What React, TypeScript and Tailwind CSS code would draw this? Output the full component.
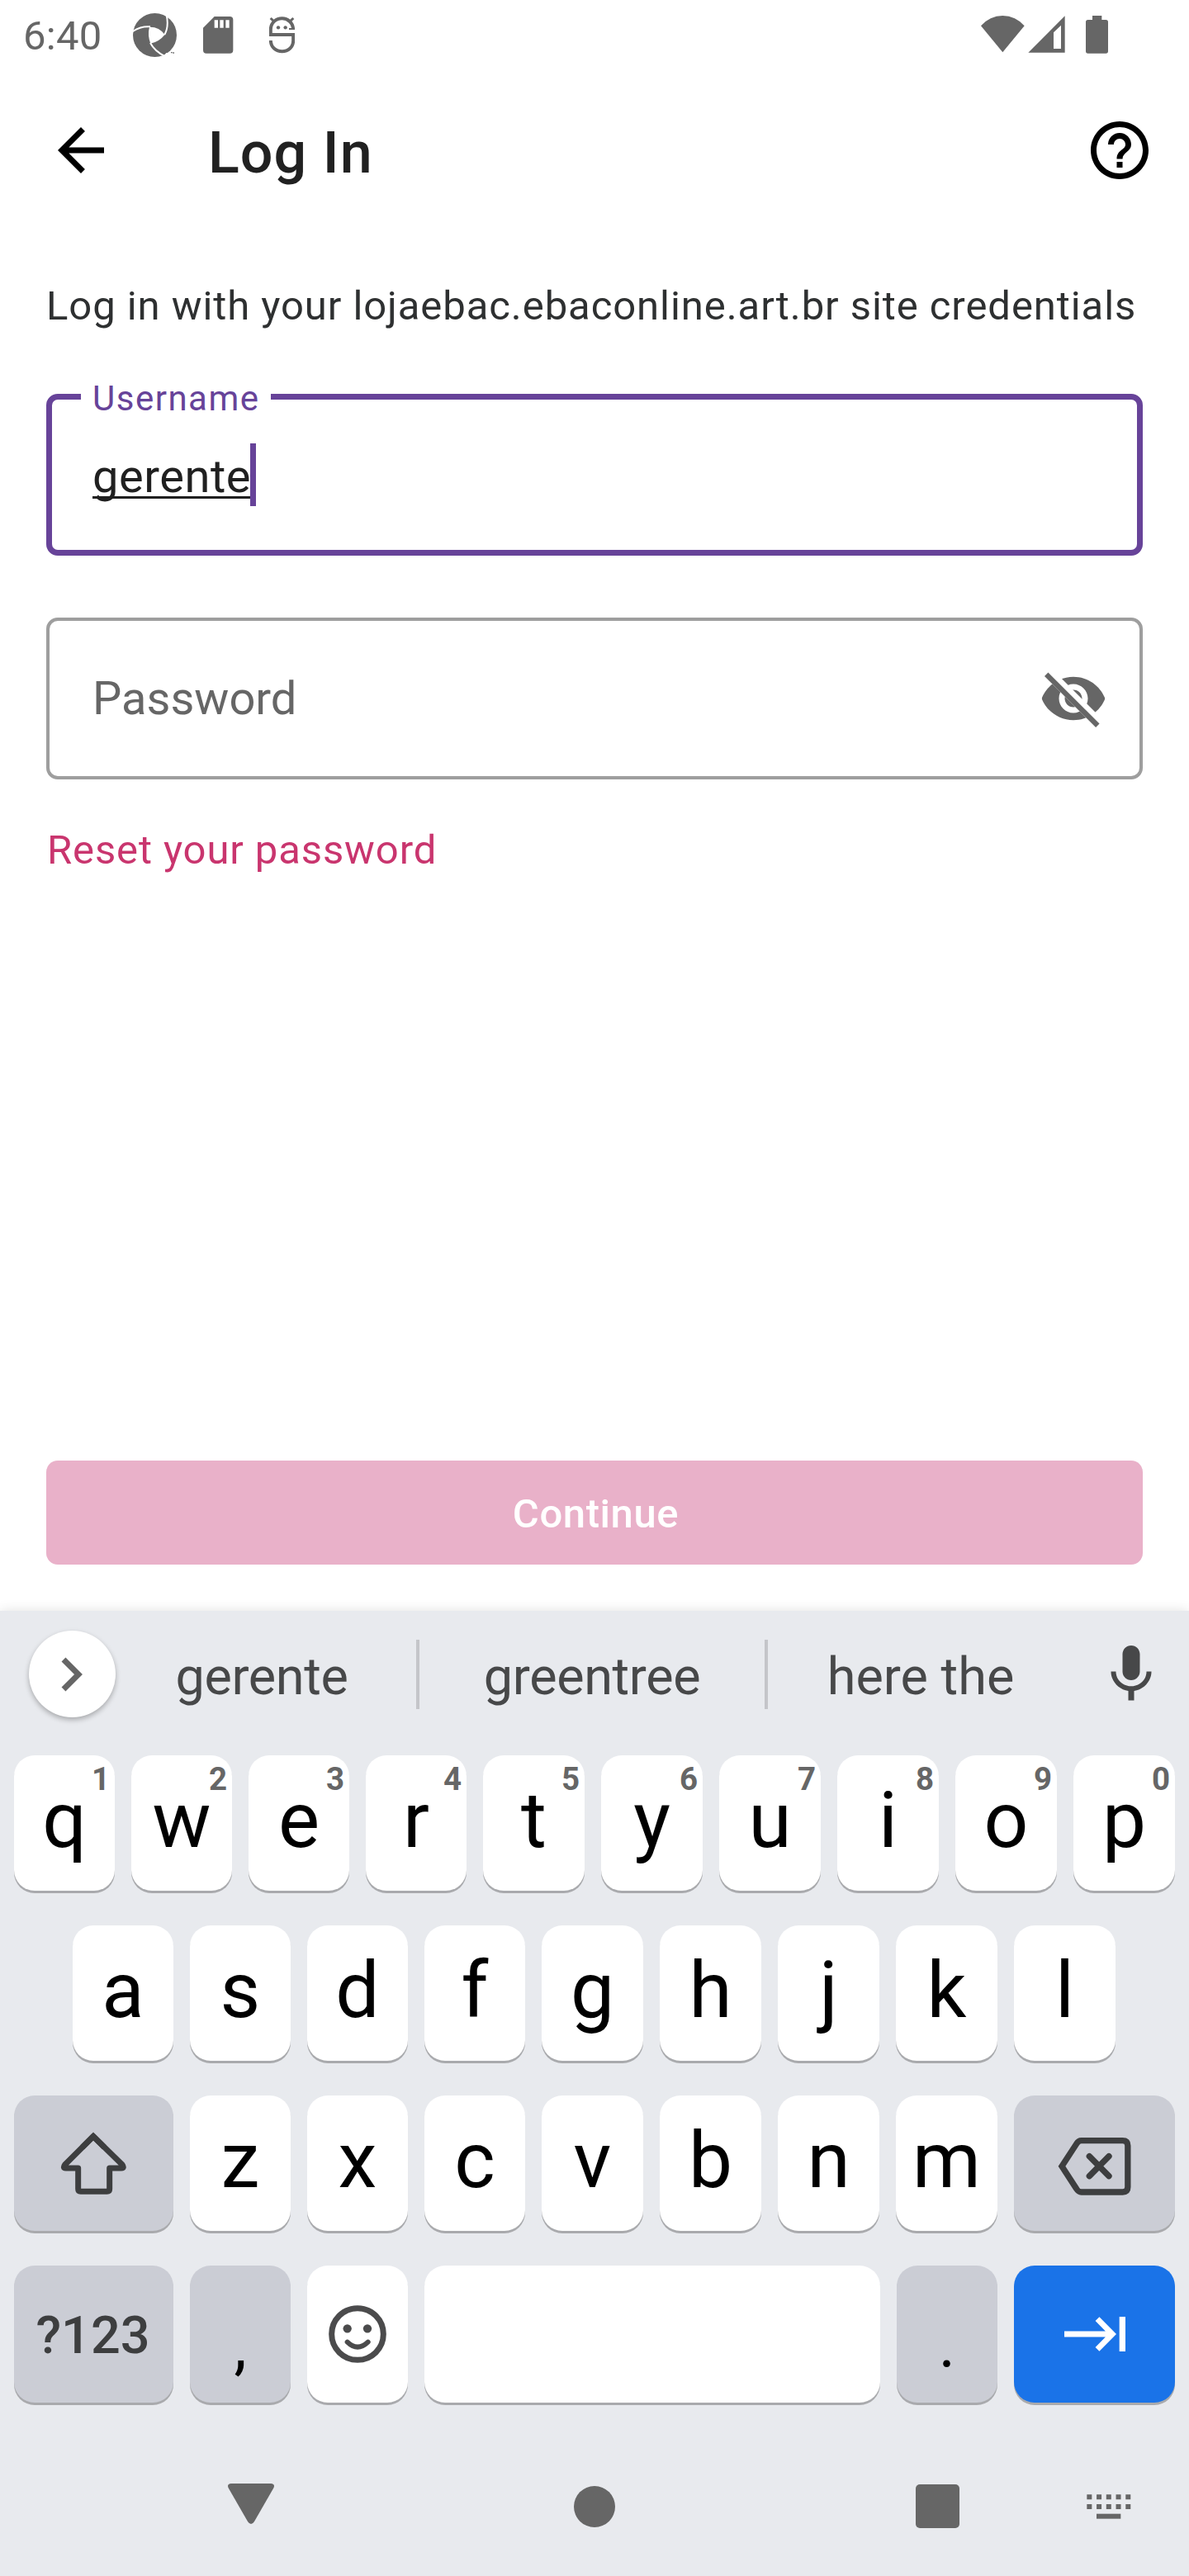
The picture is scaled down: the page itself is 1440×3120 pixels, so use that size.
import type { ReactNode } from "react";
import { MdArrowBack, MdHelpOutline, MdMic } from "react-icons/md";

function StatusBar() {
  return (
    <div className="flex h-[84px] shrink-0 items-start pl-7 text-[#666666]">
      <span className="mt-4 w-[133px] text-[49px] leading-[56px] tracking-[0.3px]">6:40</span>
      <svg className="mt-4 h-[53px] w-[53px]" viewBox="483 48 159 159">
        <circle cx="562.5" cy="127.5" r="79.5" fill="#666666" />
        <path d="M543 98Q578 97 599 126Q577 153 547 158Q535 128 543 98Z" fill="#fff" />
        <path d="M478 117Q510 94 546 97M598 126Q615 95 604 50M546 156Q562 186 600 205" fill="none" stroke="#fff" strokeWidth="6" />
        <path d="M588 212L604 192H644V212Z" fill="#fff" />
        <path d="M621 191h5M628 192h5" stroke="#666666" strokeWidth="4" />
      </svg>
      <svg className="mt-5 ml-8 h-[45px] w-[37px]" viewBox="738 60 111 135">
        <path
          fillRule="evenodd"
          fill="#666666"
          d="M779 60H835Q847 60 847 72V182Q847 194 835 194H750Q738 194 738 182V101ZM779 73V101H792V73ZM799 73V101H812V73ZM820 73V101H833V73Z"
        />
      </svg>
      <svg className="mt-5 ml-[43px] h-[45px] w-[31px]" viewBox="978 60 93 135">
        <path
          d="M1065.500 108C1065 82 1045 67 1025 67C1003 67 984 82 983.500 107V126H1065.500V148C1065 172 1047 187 1025 187C1003 187 984 172 983.500 147"
          fill="none"
          stroke="#666666"
          strokeWidth="12"
        />
        <path d="M983 66L998 80M1066 66L1051 80" stroke="#666666" strokeWidth="9" />
        <path d="M1050 102H1071V108H1050Z" fill="#666666" />
        <circle cx="1011" cy="100" r="6.500" fill="#666666" />
        <circle cx="1037" cy="100" r="6.500" fill="#666666" />
      </svg>
      <div className="mr-[98px] ml-auto flex items-start">
        <svg className="mt-[19px] h-[45px] w-[53px]" viewBox="144 57 159 135">
          <path d="M144 94A103 103 0 0 1 302 94L223 190Z" fill="#666666" />
        </svg>
        <svg className="mt-[19px] ml-1 h-[45px] w-[45px]" viewBox="315 57 135 135">
          <path fillRule="evenodd" d="M316 191H449V58ZM408 118L435 92V177H408Z" fill="#666666" />
        </svg>
        <svg className="mt-[19px] ml-[25px] h-[46px] w-[27px]" viewBox="525 57 81 138">
          <path d="M549 57H583V72H598Q606 72 606 80V186Q606 194 598 194H533Q525 194 525 186V80Q525 72 533 72H549Z" fill="#666666" />
        </svg>
      </div>
    </div>
  );
}

function Header() {
  return (
    <header className="flex h-[196px] shrink-0 items-center pr-[42px] pl-14 text-black">
      <MdArrowBack className="h-[84px] w-[84px]" />
      <h1 className="mt-[6px] ml-28 text-[70px] leading-[84px] font-medium tracking-[1.05px] text-[#212121]">Log In</h1>
      <MdHelpOutline className="ml-auto h-[84px] w-[84px]" />
    </header>
  );
}

function HiddenEye() {
  return (
    <svg className="h-[84px] w-[84px]" viewBox="0 0 24 24">
      <clipPath id="eye-clip">
        <path d="M2 4.270L19.730 22L22.270 19.460L4.540 1.730V1H23V23H1V4.270Z" />
      </clipPath>
      <path
        clipPath="url(#eye-clip)"
        fill="#666666"
        d="M12 4.500C7 4.500 2.730 7.610 1 12c1.730 4.390 6 7.500 11 7.500s9.270-3.110 11-7.500c-1.730-4.390-6-7.500-11-7.500zM12 17c-2.760 0-5-2.240-5-5s2.240-5 5-5 5 2.240 5 5-2.240 5-5 5zM12 9c-1.660 0-3 1.340-3 3s1.340 3 3 3 3-1.340 3-3-1.340-3-3-3z"
      />
      <path d="M3.270 4.270L19.740 20.740" stroke="#666666" strokeWidth="1.800" strokeLinecap="square" />
    </svg>
  );
}

function LoginForm() {
  return (
    <main className="flex h-[1671px] shrink-0 flex-col px-14 pt-[62px] pb-14">
      <p className="text-[49px] leading-[58px] tracking-[0.93px] whitespace-nowrap text-[#2e3031]">
        Log in with your lojaebac.ebaconline.art.br site credentials
      </p>
      <div className="relative mt-[77px] flex h-[196px] items-center rounded-[14px] border-[7px] border-[#674399] pl-[49px]">
        <label className="absolute -top-[25px] left-[35px] w-[230px] bg-white pl-[14px] text-[42px] leading-[48px] tracking-[1.5px] text-[#674399]">
          Username
        </label>
        <span className="mt-[4px] w-[191px] text-[56px] leading-[76px] tracking-[0.55px] whitespace-nowrap text-[#202020] underline decoration-[3px] underline-offset-[5px] [text-decoration-skip-ink:none]">
          gerente
        </span>
        <span className="h-[76px] w-[7px] bg-[#674399]" />
      </div>
      <div className="mt-[75px] flex h-[196px] items-center justify-between rounded-[14px] border-4 border-[#9e9e9e] pr-[38px] pl-[52px]">
        <span className="text-[56px] leading-[76px] text-[#666666]">Password</span>
        <HiddenEye />
      </div>
      <a className="mt-[57px] pl-px text-[49px] leading-[58px] tracking-[0.88px] text-[#c9356e]">Reset your password</a>
      <button className="mt-auto flex h-[126px] items-center justify-center rounded-[14px] bg-[#e9b1c9] pt-[3px] pl-[3px] text-[49px] leading-[58px] font-medium tracking-[0.58px] text-white">
        Continue
      </button>
    </main>
  );
}

function Suggestions() {
  return (
    <div className="flex h-[175px] shrink-0 items-start pt-6 pl-[35px] text-[63px] leading-[105px] text-[#474849]">
      <div className="flex h-[105px] w-[105px] items-center justify-center rounded-full bg-white shadow-[0_3px_6px_rgba(0,0,0,0.28)]">
        <svg className="h-[42px] w-[27px]" viewBox="0 0 27 42">
          <path d="M3 3L21 21L3 39" fill="none" stroke="#666666" strokeWidth="7" />
        </svg>
      </div>
      <span className="ml-[-12px] w-[376px] pt-[3px] pl-[2px] text-center tracking-[-0.4px]">gerente</span>
      <span className="mt-[11px] h-[84px] w-1 bg-[#c4c5c9]" />
      <span className="w-[418px] pt-[3px] text-center tracking-[-0.4px]">greentree</span>
      <span className="mt-[11px] h-[84px] w-1 bg-[#c4c5c9]" />
      <span className="w-[370px] pt-[3px] text-center">here the</span>
      <MdMic className="mt-[11px] ml-[28px] h-[84px] w-[84px]" />
    </div>
  );
}

type KeyProps = { size?: string; tone?: string; children?: ReactNode };

function Key({ size = "w-[123px] h-[164px]", tone = "bg-white", children }: KeyProps) {
  return (
    <div
      className={`relative flex shrink-0 justify-center rounded-[25px] text-[94.5px] leading-[157px] text-black shadow-[0_3px_0_#a9aaad] ${size} ${tone}`}
    >
      {children}
    </div>
  );
}

function LetterKeys({ letters, narrow, hints }: { letters: string; narrow: number; hints?: string }) {
  return (
    <>
      {letters.split("").map((letter, i) => (
        <Key key={letter} size={i < narrow ? "w-[122px] h-[164px]" : "w-[123px] h-[164px]"}>
          {letter}
          {hints && (
            <span className="absolute top-0 right-[6px] text-[38.5px] leading-[58px] font-bold text-[#666666]">{hints[i]}</span>
          )}
        </Key>
      ))}
    </>
  );
}

function ShiftIcon() {
  return (
    <svg className="mt-[43px] mr-[2px] h-[78px] w-[80px]" viewBox="158 60 240 234" fill="none" stroke="#3d3e3f" strokeWidth="21">
      <path d="M278 79.500L175 182Q166 195 178 195H223V271Q223 280 232 280H328Q337 280 337 271V195H380Q392 195 383 182Z" strokeLinejoin="round" />
      <path d="M238 119.500L278 79.500L318 119.500" />
    </svg>
  );
}

function BackspaceIcon() {
  return (
    <svg className="mt-[49px] h-[74px] w-[91px]" viewBox="535 81 273 222" fill="none" stroke="#3d3e3f" strokeWidth="22">
      <path d="M553 191.500L606 110Q613 98 624 98H774Q792.500 98 792.500 116V267Q792.500 285 774 285H624Q613 285 606 273Z" />
      <path d="M653 155L724 227M724 155L653 227" strokeLinecap="round" />
    </svg>
  );
}

function EmojiIcon() {
  return (
    <svg className="mt-[48px] h-[70px] w-[70px]" viewBox="1134 696 210 210" fill="none" stroke="#4b4b4c">
      <circle cx="1239" cy="801" r="94" strokeWidth="21" />
      <path d="M1202 830Q1239 866 1277 830" strokeWidth="18" strokeLinecap="round" />
      <circle cx="1202" cy="781" r="15.500" fill="#4b4b4c" stroke="none" />
      <circle cx="1275" cy="781" r="15.500" fill="#4b4b4c" stroke="none" />
    </svg>
  );
}

function NextIcon() {
  return (
    <svg className="mt-[61px] h-[44px] w-[76px]" viewBox="561 735 228 132" fill="none" stroke="#fff">
      <path d="M564 801H736M684 746L738.500 801L684 856" strokeWidth="20.500" />
      <path d="M775 738V864" strokeWidth="22" />
    </svg>
  );
}

function Keyboard() {
  return (
    <div className="flex flex-col gap-[42px] px-[17px]">
      <div className="flex gap-5">
        <LetterKeys letters="qwertyuiop" narrow={4} hints="1234567890" />
      </div>
      <div className="flex gap-5 pl-[71px]">
        <LetterKeys letters="asdfghjkl" narrow={4} />
      </div>
      <div className="flex gap-5">
        <Key size="w-[193px] h-[164px]" tone="bg-[#cbcdd5]">
          <ShiftIcon />
        </Key>
        <LetterKeys letters="zxcvbnm" narrow={3} />
        <Key size="w-[195px] h-[164px]" tone="bg-[#cbcdd5]">
          <BackspaceIcon />
        </Key>
      </div>
      <div className="flex gap-5">
        <Key size="w-[193px] h-[166px]" tone="bg-[#cbcdd5]">
          <span className="mr-[2px] text-[63px] leading-[170px] font-medium text-[#3d3e3f]">?123</span>
        </Key>
        <Key size="w-[122px] h-[166px]" tone="bg-[#cbcdd5]">
          <span className="text-[77px] leading-[195px]">,</span>
        </Key>
        <Key size="w-[122px] h-[166px]">
          <EmojiIcon />
        </Key>
        <Key size="w-[552px] h-[166px]" />
        <Key size="w-[122px] h-[166px]" tone="bg-[#cbcdd5]">
          <span className="text-[77px] leading-[195px]">.</span>
        </Key>
        <Key size="w-[195px] h-[166px]" tone="bg-[#1a73e8]">
          <NextIcon />
        </Key>
      </div>
    </div>
  );
}

function NavBar() {
  return (
    <div className="mt-[97px] flex items-start pl-[276px]">
      <svg className="mt-px h-[50px] w-14" viewBox="0 0 56 50">
        <path d="M4 0H52Q58 0.500 55 6L32 46Q28 52 24 46L1 6Q-2 0.500 4 0Z" fill="#666666" />
      </svg>
      <div className="mt-[4px] ml-[363px] h-[50px] w-[50px] rounded-full bg-[#666666]" />
      <div className="mt-[2px] ml-[364px] h-[53px] w-[53px] rounded-[5px] bg-[#666666]" />
      <svg className="mt-[14px] ml-[154px] h-[30px] w-[54px]" viewBox="679 123 162 90" fill="none" stroke="#666666" strokeWidth="18">
        <path d="M680 133H839M680 168H839" strokeDasharray="18 17.200" />
        <path d="M715 203H803" />
      </svg>
    </div>
  );
}

export default function App() {
  return (
    <div className="flex h-[3120px] w-[1440px] flex-col overflow-hidden bg-white font-[Roboto,sans-serif]">
      <StatusBar />
      <Header />
      <LoginForm />
      <section className="flex-1 bg-[#e8eaee] shadow-[0_0_14px_rgba(0,0,0,0.12)]">
        <Suggestions />
        <Keyboard />
        <NavBar />
      </section>
    </div>
  );
}
